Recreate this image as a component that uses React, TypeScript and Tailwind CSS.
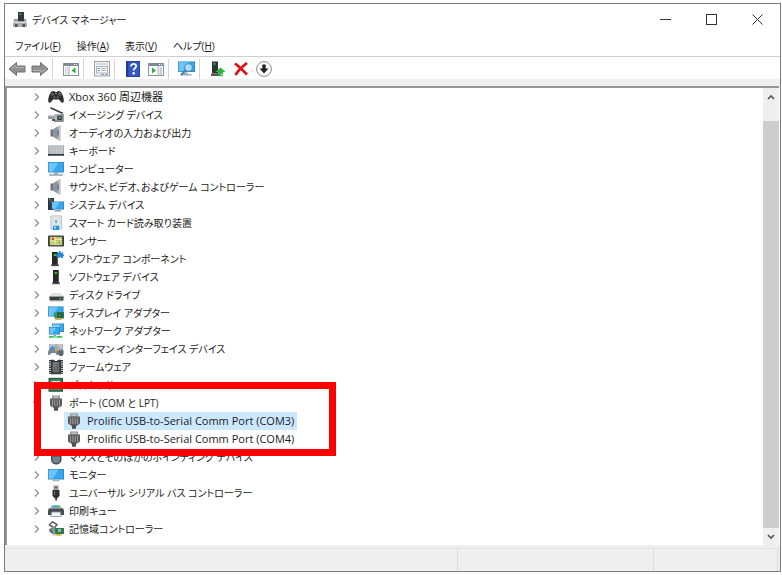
import type { ReactNode } from "react";

function Svg({ children, size = 16 }: { children: ReactNode; size?: number }) {
  return (
    <svg viewBox="0 0 16 16" width={size} height={size} className="block shrink-0" aria-hidden="true">
      {children}
    </svg>
  );
}

const Screen = ({ x, y, w, h }: { x: number; y: number; w: number; h: number }) => (
  <g>
    <rect x={x} y={y} width={w} height={h} fill="#2f7fb8" />
    <rect x={x + 0.7} y={y + 0.7} width={w - 1.4} height={h - 1.4} fill="#35a9f0" />
    <path d={`M${x + 0.7} ${y + 0.7}h${w * 0.6}l-${w * 0.35} ${h - 1.4}h-${w * 0.25}z`} fill="#6cc5fa" />
  </g>
);

const Tower = ({ x }: { x: number }) => (
  <g>
    <rect x={x} y="1" width="6" height="13" fill="#262626" />
    <rect x={x + 4.8} y="1" width="1.2" height="13" fill="#555" />
    <rect x={x + 1.8} y="3" width="2" height="2" fill="#35d33b" />
    <rect x={x - 0.8} y="13.4" width="7.6" height="1.8" fill="#4a4a4a" />
  </g>
);

const Speaker = () => (
  <Svg>
    <path d="M2.500 4.500h3v7h-3z" fill="#6d757a" />
    <path d="M5 4.500L11.500.3v15.400L5 11.500z" fill="#a4adb3" />
    <path d="M5 4.500L9 2v12l-4-2.500z" fill="#8c969d" />
    <path d="M11.200.3h1.600v15.400h-1.600z" fill="#c3cacf" />
    <path d="M9 5.500h2v5H9z" fill="#747e85" />
  </Svg>
);

const Plug = () => (
  <Svg>
    <path d="M4 .5h8v4H4z" fill="#8b8b8b" />
    <path d="M5.200 1.300h5.600v2H5.200z" fill="#c2c2c2" />
    <path d="M2 3.500h12v7l-2 1.500H4l-2-1.500z" fill="#5c5c5c" />
    <path d="M4.500 4.500v6.500M6.800 4.500v6.500M9.200 4.500v6.500M11.500 4.500v6.500" stroke="#a0a0a0" strokeWidth=".9" />
    <path d="M5 12h6l-1 1.800v2H6v-2z" fill="#505050" />
  </Svg>
);

const icons: Record<string, () => ReactNode> = {
  xbox: () => (
    <Svg>
      <path d="M3.500 2.500L6 2l1 1h2l1-1 2.500.5C14.500 5 16 9 15.800 12c-.2 2.200-2 2.200-3 .8L11 10.500H5L3.200 12.800c-1 1.400-2.800 1.400-3-.8C0 9 1.500 5 3.500 2.500z" fill="#2b2d2e" />
      <circle cx="4.300" cy="5.300" r="1.500" fill="#5d6263" />
      <circle cx="6.300" cy="8.300" r="1.200" fill="#555a5b" />
      <circle cx="9.800" cy="8.300" r="1.200" fill="#555a5b" />
      <circle cx="8" cy="4.600" r=".8" fill="#9ca2a2" />
      <circle cx="11.800" cy="4.200" r=".7" fill="#d8b92e" />
      <circle cx="13" cy="5.400" r=".7" fill="#c93b32" />
      <circle cx="11.800" cy="6.500" r=".7" fill="#42a34a" />
      <circle cx="10.700" cy="5.400" r=".7" fill="#3a7cc4" />
    </Svg>
  ),
  imaging: () => (
    <Svg>
      <path d="M2.500 .8l12.500 5.700" stroke="#3c3c3c" strokeWidth="1.500" />
      <path d="M14.500 6v3" stroke="#888" strokeWidth="1" />
      <path d="M0 8.500h7v2.200H0z" fill="#a7adaf" />
      <path d="M0 10.500h7v1H0z" fill="#4d4d4d" />
      <rect x="6" y="7" width="9.500" height="7" fill="#b1b6b8" />
      <path d="M6 13.500h9.500v1.300H6zM14.500 7h1v7h-1z" fill="#60676a" />
      <rect x="9.300" y="8.500" width="4.500" height="4.500" fill="#333b3f" />
      <rect x="10.800" y="9.700" width="1.800" height="1.800" fill="#56b8a0" />
      <path d="M4 12h3v2H4z" fill="#555" />
    </Svg>
  ),
  speaker: Speaker,
  keyboard: () => (
    <Svg>
      <rect x="0" y="2.500" width="16" height="10" fill="#8f979c" />
      <rect x=".6" y="3.200" width="14.800" height="7.600" fill="#c9ced1" />
      <path d="M1.500 5h13M1.500 7h13M1.500 9h13" stroke="#a2a8ac" strokeWidth=".9" strokeDasharray="1.200 .6" />
      <rect x="0" y="11" width="16" height="1.600" fill="#2e3336" />
    </Svg>
  ),
  computer: () => (
    <Svg>
      <Screen x={0} y={1} w={16} h={10.5} />
      <path d="M6 11.500h4v1.500H6z" fill="#8ca6b5" />
      <path d="M1 13h14v1.600H1z" fill="#b9c5cc" />
      <path d="M1 14.200h14" stroke="#7f949f" strokeWidth=".7" />
    </Svg>
  ),
  system: () => (
    <Svg>
      <rect x="0" y="1" width="6" height="12" fill="#303538" />
      <path d="M1 3h4M1 5h4" stroke="#6b7275" strokeWidth=".8" />
      <rect x="1" y="1.500" width="1.500" height="1.200" fill="#36c643" />
      <Screen x={3.5} y={4.5} w={12.5} h={8} />
      <path d="M7 13.300h6v1.200H6z" fill="#78909c" />
    </Svg>
  ),
  smartcard: () => (
    <Svg>
      <rect x="2.500" y=".5" width="11.500" height="14" rx="1" fill="#b2b8bb" />
      <rect x="3.300" y="1.200" width="9.900" height="12" fill="#dfe4e7" />
      <rect x="7.200" y="5.500" width="1.800" height="2.200" fill="#3a9fe0" />
      <rect x="5" y="10" width="7.500" height="5.500" fill="#fff" />
      <rect x="5" y="10.600" width="6.500" height="4.400" rx=".7" fill="#2695df" />
      <rect x="6" y="11.500" width="2" height="2" fill="#9fd7fa" />
    </Svg>
  ),
  sensor: () => (
    <Svg>
      <rect x="0" y="2.500" width="16" height="11" rx="1" fill="#3b3e3c" />
      <rect x="1.800" y="3.800" width="12.400" height="8.400" fill="#bccb75" />
      <path d="M2 8h5v4M7 8V4M7 6.500h7M10 12V9h4" stroke="#f6e3a2" strokeWidth="1.200" fill="none" />
      <rect x="4" y="5" width="2" height="2" fill="#dd3d35" />
      <path d="M10.500 7.500l2 2-2 1.500z" fill="#6da545" />
    </Svg>
  ),
  component: () => (
    <Svg>
      <Tower x={4} />
      <path d="M9 1.500h2V0h1.500v1.500H15v2h1v1.700h-1V7h-2V6h-1.500v1H9V5.200H8V3.500h1z" fill="#2789cf" />
    </Svg>
  ),
  software: () => (
    <Svg>
      <Tower x={5} />
    </Svg>
  ),
  disk: () => (
    <Svg>
      <path d="M3.500 6h9.500l2.500 3.500H1.500z" fill="#dfe1e2" />
      <path d="M1.500 9h14v4.500h-14z" fill="#3a3d3f" />
      <path d="M1.500 9h14v1h-14z" fill="#989d9f" />
      <rect x="11.500" y="11" width="2" height="1.300" fill="#3bd546" />
      <path d="M2 13.500h13v.8H2z" fill="#9b9b9b" />
    </Svg>
  ),
  display: () => (
    <Svg>
      <Screen x={0} y={1.5} w={15.5} h={10} />
      <path d="M6.500 7H16v6.500H6.500z" fill="#23764f" />
      <path d="M6.500 7H8v8h-.9" stroke="#8fa7a0" strokeWidth=".8" fill="none" />
      <rect x="10" y="8.500" width="3.600" height="3.200" fill="#17402f" />
      <path d="M11 9.500h1.500v1.200H11z" fill="#b6d7c4" />
      <path d="M8 13.500h5.500V15H8z" fill="#f2a72e" />
    </Svg>
  ),
  network: () => (
    <Svg>
      <Screen x={4} y={0.5} w={12} h={8.5} />
      <path d="M.5 3.500h11.500V12H.5z" fill="#cfeafa" />
      <Screen x={1} y={4} w={11} h={7.5} />
      <path d="M6 12h2v1H6z" fill="#68b77f" />
      <path d="M1 13h13v1.800H1z" fill="#3fc355" />
      <path d="M5.500 13h3.500v1.800H5.500z" fill="#8fe09c" />
    </Svg>
  ),
  human: () => (
    <Svg>
      <path d="M1 3h14v5H1z" fill="#a7adb1" />
      <path d="M2 4h5M9 4h5M2 6h3M11 6h3" stroke="#dde0e2" strokeWidth=".9" />
      <path d="M2 7.500h7c2 1.500 2.500 5.500 1 6.500s-2-2-3-2H4c-1 0-2 3-3.300 2S0 9 2 7.500z" fill="#7a8389" />
      <circle cx="4.500" cy="7.300" r="2" fill="#3196dc" />
      <circle cx="8" cy="9" r="1.200" fill="#efb42c" />
      <rect x="10.300" y="8" width="5.200" height="7" rx="2" fill="#5c666c" />
      <path d="M12.900 5v5" stroke="#c5cacd" strokeWidth="1" />
    </Svg>
  ),
  firmware: () => (
    <Svg>
      <path d="M2 1v14M14 1v14" stroke="#333" strokeWidth="2" strokeDasharray="1.400 .8" />
      <path d="M3 .8h3l1 1.200h2l1-1.200h3v14.400H3z" fill="#35383a" />
      <rect x="4.500" y="3" width="7" height="10.500" fill="#63686b" />
      <path d="M5 3.500h6L5 11z" fill="#74797c" />
    </Svg>
  ),
  processor: () => (
    <Svg>
      <rect x=".5" y=".8" width="14.500" height="14" fill="#1f5f45" />
      <rect x="2" y="2.300" width="11.500" height="11" fill="#3c8b65" />
      <rect x="3.500" y="4" width="8.500" height="8" fill="#e1e5df" />
    </Svg>
  ),
  plug: Plug,
  mouse: () => (
    <Svg>
      <rect x="3" y=".3" width="10.500" height="15.200" rx="4.800" fill="#454d52" />
      <rect x="4.500" y="1.800" width="7.500" height="12.200" rx="3.500" fill="#77838b" />
      <path d="M4.500 7h7.500M8.200 1v6" stroke="#3f474c" strokeWidth="1" />
      <rect x="7.300" y="3" width="2" height="4" fill="#4fb6ef" />
    </Svg>
  ),
  monitor: () => (
    <Svg>
      <Screen x={0} y={2} w={16} h={10.5} />
      <path d="M4.500 13.300h7v1h-7z" fill="#7f9eb0" />
    </Svg>
  ),
  usb: () => (
    <Svg>
      <path d="M5.500 .5h5v5h-5z" fill="#a3a3a3" />
      <path d="M6.600 1.700h1v1.500h-1zM8.500 1.700h1v1.500h-1z" fill="#444" />
      <path d="M4.500 5h7v5.500L9.800 13H6.200l-1.700-2.500z" fill="#2f2f2f" />
      <path d="M6 6h1.200v4H6z" fill="#666" />
      <path d="M7.200 12.500h1.800v3H7.200z" fill="#3a3a3a" />
    </Svg>
  ),
  printer: () => (
    <Svg>
      <path d="M3.500 2.500h9l1.500 3H2z" fill="#b8c0c4" />
      <path d="M4.500 2.500H8v2H4.500z" fill="#2f9ce4" />
      <path d="M8 2.500h3.500v2H8z" fill="#32bf66" />
      <path d="M1 5h14l1 2.500V12h-3.500V9.500h-9V12H0V7.500z" fill="#464d51" />
      <path d="M1 5.500h14" stroke="#848c90" strokeWidth=".9" />
      <path d="M4 9h8l1.300 4.500H2.700z" fill="#f1f4f5" stroke="#8b9498" strokeWidth=".8" />
    </Svg>
  ),
  storage: () => (
    <Svg>
      <path d="M1.500 4L4.500.8 9 3.500 6.500 7z" fill="none" stroke="#5a5f62" strokeWidth="1.500" />
      <path d="M1 8l4-2 3 2-3 4-4-2z" fill="#7b8286" />
      <path d="M2 10l4 3" stroke="#4b5053" strokeWidth="1.500" />
      <path d="M6.500 7H16v6H6.500z" fill="#2d7b52" />
      <path d="M6 6v9" stroke="#9eabb0" strokeWidth="1" />
      <rect x="10" y="8" width="3" height="3" fill="#8fbf9f" />
      <path d="M7.500 13h6v1.700h-6z" fill="#efae36" />
    </Svg>
  ),
};

function TreeIcon({ name }: { name: string }) {
  const Icon = icons[name];
  return <Icon />;
}

const before: [string, string][] = [
  ["xbox", "Xbox 360 周辺機器"],
  ["imaging", "イメージング デバイス"],
  ["speaker", "オーディオの入力および出力"],
  ["keyboard", "キーボード"],
  ["computer", "コンピューター"],
  ["speaker", "サウンド、ビデオ、およびゲーム コントローラー"],
  ["system", "システム デバイス"],
  ["smartcard", "スマート カード読み取り装置"],
  ["sensor", "センサー"],
  ["component", "ソフトウェア コンポーネント"],
  ["software", "ソフトウェア デバイス"],
  ["disk", "ディスク ドライブ"],
  ["display", "ディスプレイ アダプター"],
  ["network", "ネットワーク アダプター"],
  ["human", "ヒューマン インターフェイス デバイス"],
  ["firmware", "ファームウェア"],
  ["processor", "プロセッサ"],
];

const after: [string, string][] = [
  ["mouse", "マウスとそのほかのポインティング デバイス"],
  ["monitor", "モニター"],
  ["usb", "ユニバーサル シリアル バス コントローラー"],
  ["printer", "印刷キュー"],
  ["storage", "記憶域コントローラー"],
];

const ports = ["Prolific USB-to-Serial Comm Port (COM3)", "Prolific USB-to-Serial Comm Port (COM4)"];

function Category({ icon, label, open = false }: { icon: string; label: string; open?: boolean }) {
  const latin = /^[A-Za-z]/.test(label);
  return (
    <div className="flex h-[18px] items-center pl-6">
      <button type="button" aria-label={label} aria-expanded={open} className="flex h-4 w-[17px] shrink-0 items-center justify-center pr-[5px]">
        <svg width="8" height="8" viewBox="0 0 8 8" fill="none" stroke="#8f8f8f" strokeWidth="1.300" aria-hidden="true">
          <path d={open ? "M0 2.500l4 4 4-4" : "M2 .5L5.500 4 2 7.500"} />
        </svg>
      </button>
      <span className="flex items-center gap-[5px]">
        <TreeIcon name={icon} />
        <span className={latin ? "text-[11px] whitespace-nowrap" : "whitespace-nowrap"}>{label}</span>
      </span>
    </div>
  );
}

function Tool({ label, children }: { label: string; children: ReactNode }) {
  return (
    <button type="button" aria-label={label} className="flex h-[22px] w-[23px] shrink-0 items-center justify-center">
      {children}
    </button>
  );
}

const Divider = () => <span className="mr-[6px] ml-px h-5 w-px shrink-0 bg-[#d5d5d5]" />;

const Pane = ({ children }: { children: ReactNode }) => (
  <Svg>
    <rect x=".5" y="2.500" width="15" height="12" fill="#fff" stroke="#8d969c" />
    <rect x="1" y="2" width="14" height="3" fill="#7c8b98" />
    <path d="M11 3.500h1M13 3.500h1" stroke="#fff" />
    {children}
  </Svg>
);

const Arrow = ({ flip = false }: { flip?: boolean }) => (
  <svg width="18" height="16" viewBox="0 0 18 16" className={flip ? "rotate-180" : ""} aria-hidden="true">
    <path d="M1 8l7.500-6.500V5H17v6H8.500v3.500z" fill="#909090" stroke="#707070" strokeLinejoin="round" />
    <path d="M3.500 8L8 4.500V6.500h8" stroke="#b5b5b5" fill="none" />
  </svg>
);

const menus = [
  ["ファイル", "F"],
  ["操作", "A"],
  ["表示", "V"],
  ["ヘルプ", "H"],
];

export default function App() {
  return (
    <div className="h-screen bg-white pt-[3px] pr-px pb-[3px] pl-1 font-['Open_Sans','Noto_Sans_CJK_JP',sans-serif] text-[10px] leading-[18px] text-[#1c1c1c] [font-feature-settings:'palt']">
      <main className="flex h-full flex-col border border-[#7c7c7c] bg-white">
        <header className="flex h-[31px] shrink-0 items-center pl-[7px]">
          <Svg>
            <rect x="6" y="0" width="6" height="10" fill="#34383a" />
            <rect x="7.500" y="1.500" width="1.500" height="1.500" fill="#43cf4a" />
            <path d="M2 7h4v3H2zM12 7h2v3h-2z" fill="#929a9e" />
            <rect x="1" y="9.500" width="14" height="5.500" fill="#a9afb2" />
            <path d="M1 9.500h14v1.500H1z" fill="#d9dcde" />
            <path d="M3 12h2.500v3H3zM10.500 12H13v3h-2.500z" fill="#4c5154" />
          </Svg>
          <h1 className="ml-1 flex-1">デバイス マネージャー</h1>
          <button type="button" aria-label="最小化" className="flex h-full w-[46px] items-center justify-center">
            <svg width="11" height="11" stroke="#333" aria-hidden="true"><path d="M0 5.500h11" /></svg>
          </button>
          <button type="button" aria-label="最大化" className="flex h-full w-[46px] items-center justify-center">
            <svg width="11" height="11" fill="none" stroke="#333" aria-hidden="true"><rect x=".5" y=".5" width="10" height="10" /></svg>
          </button>
          <button type="button" aria-label="閉じる" className="flex h-full w-[46px] items-center justify-center">
            <svg width="11" height="11" stroke="#333" aria-hidden="true"><path d="M.5 .5l10 10M10.500 .5l-10 10" /></svg>
          </button>
        </header>

        <nav className="flex h-[22px] shrink-0 items-center gap-4 border-b border-[#cfcfcf] pl-[10px]">
          {menus.map(([name, key]) => (
            <button type="button" key={key} className="whitespace-nowrap">
              {name}(<u>{key}</u>)
            </button>
          ))}
        </nav>

        <div className="flex h-[22px] shrink-0 items-center pt-px" role="toolbar">
          <Tool label="戻る"><Arrow /></Tool>
          <Tool label="進む"><Arrow flip /></Tool>
          <Divider />
          <Tool label="コンソール ツリー">
            <Pane>
              <path d="M2 7h3M2 9h3M2 11h3M2 13h3" stroke="#8aa4c0" strokeDasharray="1 .7" />
              <path d="M6 5v9" stroke="#a5adb3" />
              <path d="M12.500 6.500v6L8.500 9.500z" fill="#2cae37" />
            </Pane>
          </Tool>
          <Divider />
          <Tool label="プロパティ">
            <Svg>
              <rect x=".5" y=".5" width="15" height="14.500" fill="#f4f5f6" stroke="#9aa0a5" />
              <path d="M2 3h12" stroke="#b5bdc3" />
              <rect x="2.500" y="5.500" width="11" height="6.500" fill="#fff" stroke="#a9b1b8" />
              <path d="M4 7.500h2M4 9.500h2" stroke="#3d91cd" />
              <path d="M7 7.500h5M7 9.500h5" stroke="#aab2b9" />
              <path d="M7 13.500h3M11 13.500h3" stroke="#8795a0" />
            </Svg>
          </Tool>
          <Divider />
          <Tool label="ヘルプ">
            <svg width="14" height="16" viewBox="0 0 14 16" aria-hidden="true">
              <rect x=".5" y=".5" width="13" height="15" fill="#3458c4" stroke="#27439b" />
              <path d="M1.500 1v14" stroke="#1e3a91" strokeWidth="1.500" />
              <path d="M5 5.500c0-3.500 5.500-3.200 5.200-.2-.2 1.700-2.500 1.900-2.500 4.200" fill="none" stroke="#fff" strokeWidth="1.700" />
              <circle cx="7.700" cy="12.300" r="1.200" fill="#fff" />
            </svg>
          </Tool>
          <Tool label="操作ウィンドウ">
            <Pane>
              <path d="M10 5v9" stroke="#a5adb3" />
              <path d="M11.500 7H14M11.500 9H14M11.500 11H14M11.500 13H14" stroke="#8aa4c0" />
              <path d="M4 6.500v6L8 9.500z" fill="#2cae37" />
            </Pane>
          </Tool>
          <Divider />
          <Tool label="ハードウェア変更のスキャン">
            <svg width="18" height="16" viewBox="0 0 18 16" aria-hidden="true">
              <Screen x={0} y={0.5} w={17} h={10.5} />
              <path d="M6 11.500h4v1.500H6zM2.500 13h11v1.500h-11z" fill="#97b2c2" />
              <circle cx="10.500" cy="6.500" r="3.800" fill="#c8ecff" fillOpacity=".8" stroke="#518bb1" strokeWidth="1.100" />
              <path d="M7.500 9.500L3 14" stroke="#4e7c9b" strokeWidth="1.800" />
            </svg>
          </Tool>
          <Divider />
          <Tool label="ドライバーの更新">
            <Svg>
              <rect x="2" y=".5" width="6" height="12" fill="#303437" />
              <rect x="3.500" y="2" width="1.800" height="1.800" fill="#36cf44" />
              <path d="M1 12.500h9V15H1z" fill="#55595b" />
              <path d="M10.500 6.500l5 4.500h-2.700v2.500H8.200V11H5.500z" fill="#27b83a" />
              <path d="M8.200 14h4.600v1.200H8.200z" fill="#27b83a" />
            </Svg>
          </Tool>
          <Tool label="アンインストール">
            <svg width="14" height="14" viewBox="0 0 14 14" aria-hidden="true">
              <path d="M1 1.500C5 4.500 9 8.500 13 12.500M13 1C8.500 4.500 4 8.500 1.500 13" stroke="#dc1212" strokeWidth="2.800" fill="none" />
            </svg>
          </Tool>
          <Tool label="無効化">
            <Svg>
              <circle cx="8" cy="8" r="7.400" fill="#fff" stroke="#8a8a8a" />
              <path d="M6.300 3.500h3.400v4h2.800L8 12.500 3.500 7.500h2.800z" fill="#222" />
            </Svg>
          </Tool>
        </div>

        <div className="h-[7px] shrink-0 bg-[#efefef]" />

        <section className="mr-px flex min-h-0 flex-1 border-t-2 border-l-2 border-[#949494]">
          <div className="min-w-0 flex-1 overflow-hidden">
            {before.map(([icon, label]) => (
              <Category key={label} icon={icon} label={label} />
            ))}
            <div className="relative">
              <Category icon="plug" label="ポート (COM と LPT)" open />
              {ports.map((port, i) => (
                <div key={port} className="flex h-[18px] items-center pl-[57px] text-[11px]">
                  <span className={`flex h-[18px] items-center gap-[5px] pr-[3px] pl-[2px] ${i === 0 ? "bg-[#cce8ff]" : ""}`}>
                    <TreeIcon name="plug" />
                    <span className="whitespace-nowrap">{port}</span>
                  </span>
                </div>
              ))}
              <div className="pointer-events-none absolute -top-3 -bottom-2 left-[27px] w-[302px] border-[7px] border-[#ff0000]" />
            </div>
            {after.map(([icon, label]) => (
              <Category key={label} icon={icon} label={label} />
            ))}
          </div>
          <div className="flex w-4 shrink-0 flex-col bg-[#efefef]">
            <button type="button" aria-label="上へスクロール" className="flex h-[33px] w-4 shrink-0 justify-center pt-[6px]">
              <svg width="8" height="6" fill="none" stroke="#555" strokeWidth="1.600" aria-hidden="true"><path d="M1 5l3-3 3 3" /></svg>
            </button>
            <div className="flex-1 bg-[#cdcdcd]" />
            <button type="button" aria-label="下へスクロール" className="flex h-[17px] w-4 shrink-0 items-center justify-center">
              <svg width="8" height="6" fill="none" stroke="#555" strokeWidth="1.600" aria-hidden="true"><path d="M1 1l3 3 3-3" /></svg>
            </button>
          </div>
        </section>

        <footer className="h-[26px] shrink-0 bg-[#efefef] pt-[3px]">
          <div className="flex h-full border-t border-[#e2e2e2]">
            <span className="flex-1 border-r border-[#dcdcdc]" />
            <span className="w-[196px] border-r border-[#dcdcdc]" />
            <span className="mr-[2px] w-[124px] border-r border-[#dcdcdc]" />
          </div>
        </footer>
      </main>
    </div>
  );
}
